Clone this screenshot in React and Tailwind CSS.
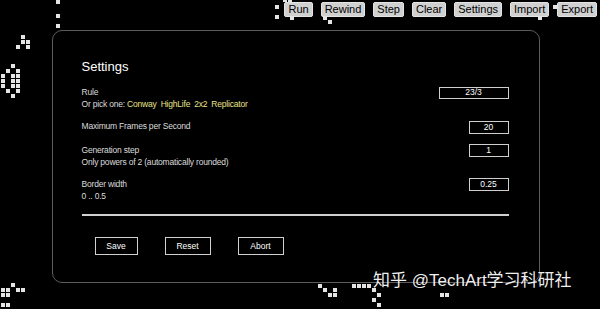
const cells = [
  [56, 0], [56, 14], [56, 24],
  [21, 35], [21, 40], [26, 40], [16, 45], [26, 45],
  [11, 64], [6, 69], [16, 69], [1, 74], [11, 74], [16, 74], [1, 79], [11, 79], [16, 79],
  [1, 84], [11, 84], [16, 84], [6, 89], [16, 89], [11, 94],
  [11, 283], [1, 288], [6, 288], [16, 288], [21, 288], [1, 293], [6, 293], [1, 303], [6, 303],
  [275, 5], [275, 15], [290, 16], [323, 16], [328, 20], [283, -2], [288, -2], [538, 16], [553, 5],
  [318, 284], [323, 288], [333, 288], [328, 293], [333, 293],
  [352, 284], [357, 284], [362, 284], [367, 284], [372, 288], [377, 293], [372, 298], [377, 303],
  [440, 293], [445, 293],
]

const tools = ['Run', 'Rewind', 'Step', 'Clear', 'Settings', 'Import', 'Export']

function Field({ label, hint, value, wide, children }) {
  return (
    <div className="flex items-start justify-between">
      <div className="text-[8.5px] leading-[12px] tracking-[-0.2px] text-[#dcdcdc]">
        <div>{label}</div>
        {hint && <div>{hint}</div>}
        {children}
      </div>
      <div
        className={`${wide ? 'w-[70px] h-[12px]' : 'w-[40px] h-[13px]'} mt-[0.5px] border border-[#cfcfcf] flex items-center justify-center text-[8.5px] text-white`}
      >
        {value}
      </div>
    </div>
  )
}

export default function App() {
  return (
    <div className="relative w-[600px] h-[309px] bg-black overflow-hidden font-['Liberation_Sans',Arial,sans-serif]">
      {/* life cells */}
      {cells.map(([x, y], i) => (
        <div key={i} className="absolute w-[4px] h-[4px] bg-[#e4e4e4]" style={{ left: x, top: y }} />
      ))}

      {/* toolbar */}
      <div className="relative flex justify-end items-start gap-[8px] h-[30px] pt-[2px] pr-[3px]">
        {tools.map((t) => (
          <button
            key={t}
            className="h-[15px] px-[3px] rounded-[2px] bg-[#d0d0d0] border border-[#e4e4e4] text-[11px] leading-[13px] text-black"
          >
            {t}
          </button>
        ))}
      </div>

      {/* settings panel */}
      <div className="relative ml-[52px] w-[488px] h-[253px] bg-black border-[1.5px] border-[#5c5c5c] rounded-[10px] pl-[28.5px] pr-[30.5px] pt-[28px]">
        <h1 className="text-[13px] leading-[16px] font-medium text-white">Settings</h1>

        <div className="mt-[11px] flex flex-col gap-[10px]">
          <Field label="Rule" value="23/3" wide>
            <div>
              Or pick one:{' '}
              <span className="text-[#e9e28c]">
                <span className="mr-[4px]">Conway</span>
                <span className="mr-[4px]">HighLife</span>
                <span className="mr-[4px]">2x2</span>
                <span>Replicator</span>
              </span>
            </div>
          </Field>
          <Field label="Maximum Frames per Second" value="20" />
          <Field label="Generation step" hint="Only powers of 2 (automatically rounded)" value="1" />
          <Field label="Border width" hint="0 .. 0.5" value="0.25" />
        </div>

        <div className="mt-[12.5px] h-[1.5px] bg-[#d0d0d0]" />

        <div className="mt-[21.5px] ml-[13px] flex gap-[27px]">
          <button className="w-[43px] h-[18px] border border-[#d0d0d0] text-[8.5px] text-white">Save</button>
          <button className="w-[46px] h-[18px] border border-[#d0d0d0] text-[8.5px] text-white">Reset</button>
          <button className="w-[46px] h-[18px] border border-[#d0d0d0] text-[8.5px] text-white">Abort</button>
        </div>
      </div>

      {/* watermark */}
      <div className="absolute left-[373px] top-[271px] text-[17px] leading-[20px] text-white/95 font-['Liberation_Sans','Noto_Sans_CJK_SC',sans-serif] whitespace-nowrap">
        知乎 @TechArt学习科研社
      </div>
    </div>
  )
}
